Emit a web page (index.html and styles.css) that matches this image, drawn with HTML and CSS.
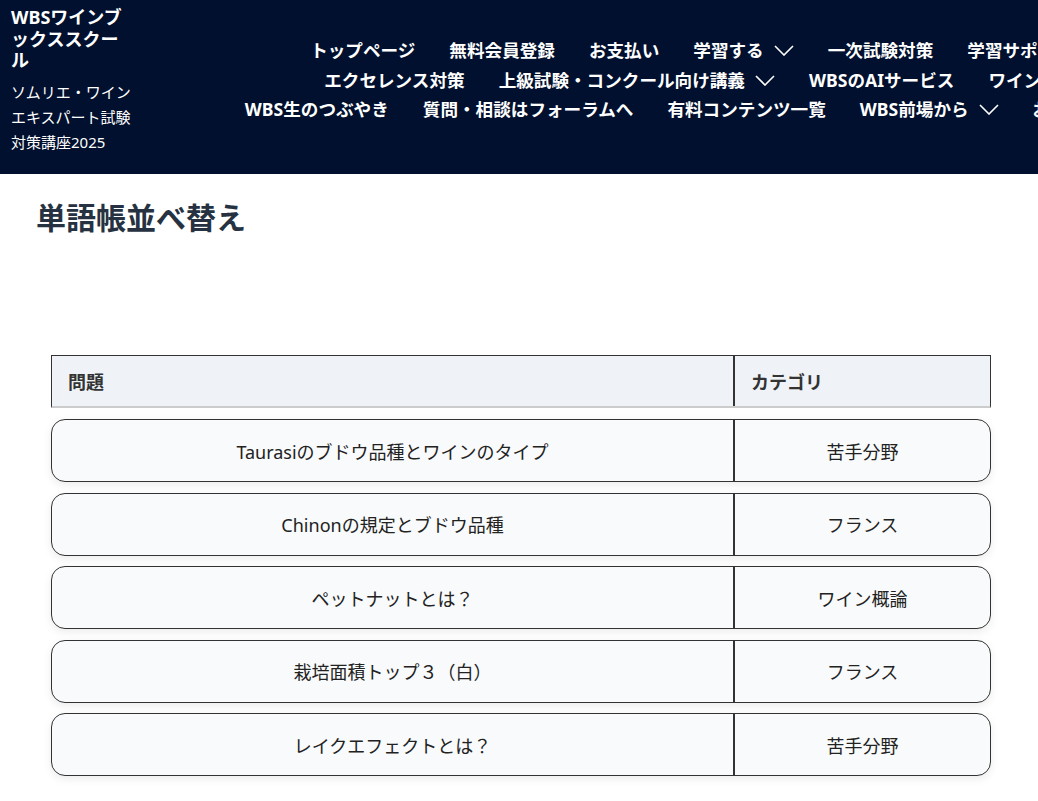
FILE: index.html
```html
<!DOCTYPE html>
<html lang="ja">
<head>
<meta charset="utf-8">
<title>単語帳並べ替え</title>
<link rel="stylesheet" href="styles.css">
</head>
<body>
<header class="site-header">
  <div class="brand">
    <div class="brand-title">WBSワインブックススクール</div>
    <div class="brand-sub">ソムリエ・ワインエキスパート試験対策講座2025</div>
  </div>
  <nav class="main-nav">
    <ul class="nav-row">
      <li>トップページ</li>
      <li>無料会員登録</li>
      <li>お支払い</li>
      <li>学習する<svg class="chev" viewBox="0 0 20 11"><polyline points="1,1 10,10 19,1"/></svg></li>
      <li>一次試験対策</li>
      <li>学習サポート<svg class="chev" viewBox="0 0 20 11"><polyline points="1,1 10,10 19,1"/></svg></li>
    </ul>
    <ul class="nav-row">
      <li>エクセレンス対策</li>
      <li>上級試験・コンクール向け講義<svg class="chev" viewBox="0 0 20 11"><polyline points="1,1 10,10 19,1"/></svg></li>
      <li>WBSのAIサービス</li>
      <li>ワイン会<svg class="chev" viewBox="0 0 20 11"><polyline points="1,1 10,10 19,1"/></svg></li>
    </ul>
    <ul class="nav-row">
      <li>WBS生のつぶやき</li>
      <li>質問・相談はフォーラムへ</li>
      <li>有料コンテンツ一覧</li>
      <li>WBS前場から<svg class="chev" viewBox="0 0 20 11"><polyline points="1,1 10,10 19,1"/></svg></li>
      <li>お問い合わせ<svg class="chev" viewBox="0 0 20 11"><polyline points="1,1 10,10 19,1"/></svg></li>
    </ul>
  </nav>
</header>

<main class="content">
  <h1 class="page-title">単語帳並べ替え</h1>

  <div class="word-table">
    <div class="thead">
      <div class="cell q">問題</div>
      <div class="cell c">カテゴリ</div>
    </div>
    <div class="trow">
      <div class="cell q">Taurasiのブドウ品種とワインのタイプ</div>
      <div class="cell c">苦手分野</div>
    </div>
    <div class="trow">
      <div class="cell q">Chinonの規定とブドウ品種</div>
      <div class="cell c">フランス</div>
    </div>
    <div class="trow">
      <div class="cell q">ペットナットとは？</div>
      <div class="cell c">ワイン概論</div>
    </div>
    <div class="trow">
      <div class="cell q">栽培面積トップ３（白）</div>
      <div class="cell c">フランス</div>
    </div>
    <div class="trow">
      <div class="cell q">レイクエフェクトとは？</div>
      <div class="cell c">苦手分野</div>
    </div>
  </div>
</main>
</body>
</html>
```

FILE: styles.css
```css
* { box-sizing: border-box; }

html, body {
  margin: 0;
  padding: 0;
  background: #ffffff;
  overflow: hidden;
}

body {
  font-family: "Noto Sans", "Noto Sans CJK JP", sans-serif;
  color: #222222;
  width: 1038px;
}

.site-header {
  display: flex;
  height: 174px;
  background: #00102e;
  color: #ffffff;
  padding-left: 11px;
  overflow: hidden;
}

.brand {
  flex: none;
  width: 124px;
  padding-top: 7px;
}

.brand-title {
  font-size: 18px;
  font-weight: 700;
  line-height: 21.5px;
  line-break: loose;
}

.brand-sub {
  margin-top: 8px;
  font-size: 15px;
  line-height: 25px;
  line-break: loose;
}

.main-nav {
  flex: none;
  width: 1122px;
  margin-left: 10.5px;
  padding-top: 36px;
}

.nav-row {
  list-style: none;
  margin: 0;
  padding: 0;
  display: flex;
  justify-content: center;
  gap: 34px;
  white-space: nowrap;
}

.nav-row li {
  display: flex;
  align-items: center;
  font-size: 17.6px;
  font-weight: 700;
  line-height: 29.5px;
}

.chev {
  width: 20px;
  height: 11px;
  margin-left: 10px;
  fill: none;
  stroke: #ffffff;
  stroke-width: 1.6;
}

.content {
  padding: 26px 0 0 36px;
}

.page-title {
  margin: 0;
  font-size: 30px;
  line-height: 36px;
  font-weight: 700;
  color: #263241;
}

.word-table {
  margin: 119px 0 0 15px;
  width: 940px;
  display: flex;
  flex-direction: column;
}

.thead {
  display: flex;
  height: 53px;
  background: #eff3f8;
  border: 1px solid #333333;
  border-bottom: 2px solid #cccccc;
  margin-bottom: 11px;
}

.thead .cell {
  font-size: 18px;
  font-weight: 700;
  color: #333333;
  padding-left: 16px;
  justify-content: flex-start;
}

.cell {
  display: flex;
  align-items: center;
  justify-content: center;
}

.cell.q {
  flex: none;
  width: 681px;
}

.cell.c {
  flex: 1;
  border-left: 2px solid #333333;
}

.trow {
  display: flex;
  height: 63px;
  background: #f9fafb;
  border: 1px solid #333333;
  border-radius: 14px;
  box-shadow: 0 3px 8px rgba(0, 0, 0, 0.08);
  margin-bottom: 10.5px;
  font-size: 18px;
  color: #222222;
}
```
